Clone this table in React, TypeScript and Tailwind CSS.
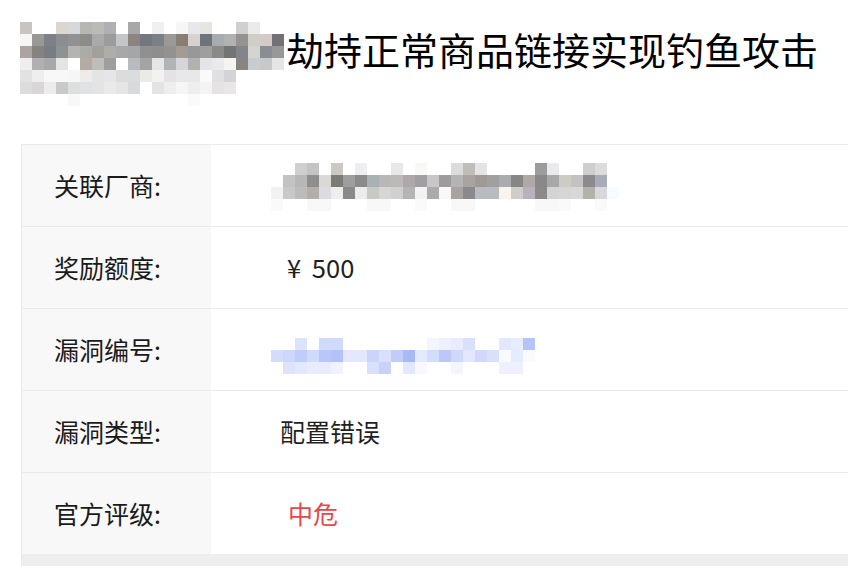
const titleBlur = [
    ["#c8c4c0", "", "", "#dcd6d0", "#d8d8da", "#b8b6b4", "#bdbab6", "#b0b0b2", "", "#a8a8aa", "", "#f0f0f0", "", "#f4f6f8", "#e8e8ea", "#e8e4e0", "", "", "#d0d0d0", "#eeeae8", "", ""],
    ["#f8f6f4", "#9a9896", "#7e8088", "#8a8e92", "#929090", "#8e8c8a", "#a8aaae", "#9c9c9c", "#c4c6c8", "#8c8480", "#727880", "#7a8088", "#9a9a98", "#8a7e74", "#d8d2cc", "#6e747c", "#a8acae", "#b0b2b4", "#969290", "#d0ccc8", "#d4ccc4", "#747078"],
    ["#aaa4a2", "#86827e", "#787c84", "#8e9294", "#b4b4b0", "#aaaca8", "#a4a09c", "#b0aca8", "#a8a8aa", "#a4a6a8", "#909090", "#8e8e8e", "#929290", "#a49c94", "#98989a", "#9e9e9e", "#8c8a88", "#747474", "#82868c", "#d4d4d0", "#8a8e94", "#9a9896"],
    ["#eeeeee", "#b0b0b2", "#a8a8a8", "#e4e4e2", "", "#b4aca4", "#c0bcb8", "#9c9ea0", "", "#b8bcc0", "#a4a4a4", "#e4e6e8", "#b0b4b6", "#d4d6da", "#b4b0ae", "#e6e4e6", "#e8eaee", "#f6f4f2", "#8a8480", "#c8ccd0", "#c6c8ca", "#e4e6e6"],
    ["#e4e2e0", "#eeeeee", "#f8f8f8", "#f8f8f8", "#f4f6f8", "#eeecea", "#e2e4e6", "#e4e6e8", "#dcdcda", "#dadcde", "#eceae6", "#f4f2f0", "#e4e2e4", "#e8e8e8", "#e8e8ea", "#fafafa", "#e0e0e2", "#d4d4d6", "", "", "", ""],
    ["#dcdcde", "#d8d6d6", "#ececec", "#c8cac8", "#dcdee0", "#e0e2e4", "#e4e4e4", "#eceae8", "#e4e6e6", "#d8dadc", "", "#e4e4e6", "#eeeeee", "#f6f6f6", "#eeeeee", "#f4f4f4", "#e6e4e2", "#e8e6e6", "", "", "", ""],
    ["", "", "", "", "#f8f8f8", "", "", "", "", "", "", "", "", "", "#fafafa", "", "", "", "", "", "", ""],
];

const vendorBlur = [
    ["", "", "#d0cece", "#c4c4c4", "", "#ccc8c4", "", "#eeeef0", "", "", "#e8e8e8", "", "#faf8f6", "", "", "#dcdcdc", "#c0bcb8", "#e4e4e6", "", "", "", "", "#9c9c9c", "#eaeaec", "", "", "#d0cecc", "#dcdcde", ""],
    ["", "#c4c2c2", "#b8b6b6", "#8e8e8e", "#dcd8d6", "#7e7a76", "#9e9e9e", "#8a8a8c", "#aab0b4", "#b8b8b8", "#bcbab8", "#b0a8a8", "#a0a0a4", "#c8c6c6", "#9c9c9c", "#b4b4b4", "#a8a4a0", "#a09a96", "#a0a0a0", "#aaacae", "#868686", "#b0a8a6", "#8a8888", "#a8a8a8", "#cecac6", "#c2c2c2", "#8c8a8c", "#a8acb8", ""],
    ["#f2f2f2", "#c8c8ca", "#bcbcbc", "#b4aeaa", "#dcdce0", "#eeeeee", "#8a8a8a", "#ececec", "#c8c8c4", "#d8d6d4", "#d0d0d0", "#b4b4b4", "#f4f2f2", "#acaaaa", "#f8f8f8", "#a8a2a0", "#8a8a8c", "#b8bcc0", "#b8bcc0", "#fbf4ec", "#d0ccc8", "#b4b2bc", "#8e8888", "#d4d4d4", "#d6d6d6", "#d8d8d8", "#b2b2aa", "#d8d8dc", "#f4fcff"],
    ["#fafafa", "", "", "#f8f8f8", "#f8f8f8", "", "", "", "#f8f8f8", "#f8f8f8", "", "", "#fafafa", "", "", "#f8f8f8", "#f8f8f8", "", "", "", "", "", "#f8f8f8", "#f8f8f8", "#fafafa", "", "", "#fafafa", ""],
];

const bugIdBlur = [
    ["", "", "#dce4fc", "", "#d0dafc", "#d0dafc", "", "", "", "", "", "", "", "#f4f6fe", "#eef0fe", "#e8ecfe", "#d8e0fc", "", "", "#e4e8fe", "#e8ecfe", "#b4c4f8"],
    ["#d4dcfc", "#cdd6fc", "#c0ccfa", "#d0dafc", "#b8c6fa", "#b4c2fa", "#e4e8fe", "#e4e8fe", "#ccd4fa", "#d8e0fc", "#c0ccfa", "#a8baf6", "#e4eafe", "#d4dcfc", "#bcc8fa", "#d0d8fc", "#e4e8fe", "#d0d8fc", "#d8e0fc", "#f8fafe", "#e4ecfe", "#f8fcff"],
    ["", "#dce4fc", "#e4e8fe", "#e8ecfe", "#e8ecfe", "#f0f2fe", "", "", "#d8e0fc", "#c8d2fa", "", "#e4e8fe", "#f8f8ff", "", "", "#f4f6fe", "", "", "", "#eef0fe", "#eef0fe", ""],
];

const Mosaic = ({ rows, size = 12 }: { rows: string[][]; size?: number }) => {
    const cols = Math.max(...rows.map((r) => r.length));
    return (
        <svg width={cols * size} height={rows.length * size} shapeRendering="crispEdges" className="block shrink-0">
            {rows.map((row, y) =>
                row.map((c, x) =>
                    c ? <rect key={`${x}-${y}`} x={x * size} y={y * size} width={size} height={size} fill={c} /> : null
                )
            )}
        </svg>
    );
};

const rows: { label: string; value: React.ReactNode }[] = [
    { label: "关联厂商:", value: <div className="mt-[2px]"><Mosaic rows={vendorBlur} /></div> },
    { label: "奖励额度:", value: <span className="ml-[16px] [word-spacing:5px] text-[25.5px]">¥ 500</span> },
    { label: "漏洞编号:", value: <div className="mt-[12px]"><Mosaic rows={bugIdBlur} /></div> },
    { label: "漏洞类型:", value: <span className="ml-[9px]">配置错误</span> },
    { label: "官方评级:", value: <span className="ml-[17px] text-[#e84749]">中危</span> },
];

const App = () => {
    return (
        <div className="w-[848px] h-[566px] overflow-hidden bg-white font-['Noto_Sans_CJK_SC',sans-serif] text-[#1a1a1a]">
            <div className="flex items-start pt-[22px] pl-5 h-[144px]">
                <Mosaic rows={titleBlur} />
                <h1 className="ml-[2px] mt-[4px] text-[38px] leading-[45px] font-normal text-black whitespace-nowrap">
                    劫持正常商品链接实现钓鱼攻击
                </h1>
            </div>
            <div className="ml-[21px] w-[880px] border-l border-[#ebebeb]">
                {rows.map((row) => (
                    <div key={row.label} className="flex h-[82px] border-t border-[#ebebeb]">
                        <div className="w-[189px] shrink-0 bg-[#f8f8f8] flex items-center pl-[32px] text-[25px]">
                            {row.label}
                        </div>
                        <div className="flex-1 flex items-center pl-[60px] text-[25px] text-[#1f1f1f]">
                            {row.value}
                        </div>
                    </div>
                ))}
                <div className="h-[20px] bg-[#eeeeee]" />
            </div>
        </div>
    );
};

export default App;
